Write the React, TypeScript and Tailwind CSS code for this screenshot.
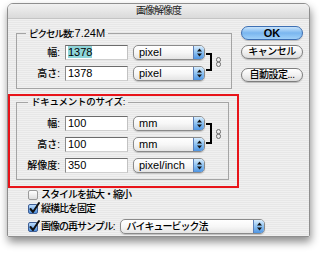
import React from 'react';

const Arrows = () => (
  <svg width="5" height="9" viewBox="0 0 5 9">
    <polygon points="0,3.6 2.5,0.6 5,3.6" fill="#111" />
    <polygon points="0,5.4 2.5,8.4 5,5.4" fill="#111" />
  </svg>
);

const Select = ({ label, className = '', jp }: { label: string; className?: string; jp?: boolean }) => (
  <div
    className={`flex h-[15px] items-stretch rounded-[5px] border border-[#8a8a8a] bg-gradient-to-b from-white via-[#f7f7f7] to-[#e4e4e4] shadow-[0_1px_1px_rgba(0,0,0,0.18)] ${className}`}
  >
    <span
      className={`flex-1 truncate pl-[5px] leading-[13px] text-black ${jp ? 'text-[10px] font-medium tracking-[-1px]' : 'text-[11px]'}`}
    >
      {label}
    </span>
    <span className="flex w-[11px] items-center justify-center rounded-r-[4px] border-l border-[#5b7fb8] bg-gradient-to-b from-[#d8ecfc] via-[#8cc1f1] to-[#4e95e3]">
      <Arrows />
    </span>
  </div>
);

const Field = ({ label, value, unit, selected }: { label: string; value: string; unit: string; selected?: boolean }) => (
  <div className="flex h-[15px] items-center">
    <span className="w-[43px] text-right text-[10px] font-medium leading-none text-black">{label}</span>
    <div className="ml-[5px] h-[15px] w-[63px] border border-t-[#6b6b6b] border-l-[#8a8a8a] border-r-[#c2c2c2] border-b-[#cfcfcf] bg-white pl-[2px] text-[11px] leading-[13px] text-black">
      {selected ? <span className="bg-[#8ed5d9]">{value}</span> : value}
    </div>
    <Select label={unit} className="ml-[5px] w-[72px]" />
  </div>
);

const Link = ({ tall }: { tall?: boolean }) => (
  <div className="flex items-center">
    <div className={`ml-[1px] w-[6px] border-y-2 border-r-2 border-black ${tall ? 'h-[21px]' : 'h-[18px]'}`} />
    <svg className="ml-[4px]" width="5" height="10" viewBox="0 0 5 10">
      <rect x="0.5" y="0.5" width="4" height="4.5" rx="2" fill="none" stroke="#6e6e6e" />
      <rect x="0.5" y="5" width="4" height="4.5" rx="2" fill="none" stroke="#6e6e6e" />
    </svg>
  </div>
);

const Button = ({ children, primary }: { children: React.ReactNode; primary?: boolean }) => (
  <div
    className={`flex h-[14px] w-[62px] items-center justify-center rounded-full border leading-none text-black shadow-[0_1px_1px_rgba(0,0,0,0.2)] ${
      primary
        ? 'border-[#3d6fb3] bg-gradient-to-b from-[#c9e4fb] via-[#7ab6ef] to-[#9fd0f8] text-[11px] font-bold'
        : 'border-[#7e7e7e] bg-gradient-to-b from-white via-[#f1f1f1] to-[#dcdcdc] text-[10px] font-medium tracking-[-0.5px]'
    }`}
  >
    {children}
  </div>
);

const Check = ({ checked }: { checked?: boolean }) =>
  checked ? (
    <div className="relative h-[10px] w-[10px] rounded-[2px] border border-[#3f5f96] bg-gradient-to-b from-[#bcdcfb] to-[#4d8fdc]">
      <svg className="absolute left-[0px] top-[-3px] overflow-visible" width="11" height="12" viewBox="0 0 11 12">
        <path d="M1.5 7 L4 10 L10 1" fill="none" stroke="#111" strokeWidth="2" strokeLinecap="round" strokeLinejoin="round" />
      </svg>
    </div>
  ) : (
    <div className="h-[10px] w-[10px] rounded-[2px] border border-[#9a9a9a] bg-gradient-to-b from-white to-[#dedede]" />
  );

export default function App() {
  return (
    <div className="h-[253px] w-[320px] overflow-hidden bg-white pt-[3px] font-['Liberation_Sans','Noto_Sans_CJK_JP',sans-serif]">
      <div className="ml-[7px] flex h-[234px] w-[303px] flex-col overflow-hidden rounded-t-[6px] rounded-b-[2px] border border-[#8e8e8e] shadow-[1px_5px_8px_rgba(0,0,0,0.45)]">
        <div className="flex h-[15px] items-center justify-center border-b border-[#c4c4c4] bg-gradient-to-b from-[#f1f1f1] to-[#dadada] text-[10px] leading-none tracking-[-1px] text-[#222]">
          画像解像度
        </div>
        <div className="flex-1 bg-[repeating-linear-gradient(180deg,#f0f0f0_0px,#f0f0f0_1px,#e7e7e7_1px,#e7e7e7_2px)]">
          <div className="flex">
            <div className="w-[233px]">
              <fieldset className="ml-[8px] mt-[7px] w-[216px] border border-[#a4a4a4] pb-[7px] pt-[5px]">
                <legend className="ml-[9px] px-[3px] leading-[12px] text-black">
                  <span className="text-[9.5px] font-medium tracking-[-1px]">ピクセル数</span>
                  <span className="text-[11px]">:7.24M</span>
                </legend>
                <div className="flex">
                  <div className="flex flex-col gap-[6px]">
                    <Field label="幅:" value="1378" unit="pixel" selected />
                    <Field label="高さ:" value="1378" unit="pixel" />
                  </div>
                  <div className="mt-[8px] self-start">
                    <Link />
                  </div>
                </div>
              </fieldset>
              <div className="mt-[5px] w-[231px] border-2 border-[#e8141a] pb-[6px]">
                <fieldset className="ml-[6px] w-[213px] border border-[#a4a4a4] pb-[6px] pt-[8px]">
                  <legend className="ml-[11px] px-[3px] text-[9.5px] font-medium leading-[12px] tracking-[-0.3px] text-black">
                    ドキュメントのサイズ:
                  </legend>
                  <div className="flex">
                    <div className="flex flex-col gap-[6px]">
                      <Field label="幅:" value="100" unit="mm" />
                      <Field label="高さ:" value="100" unit="mm" />
                      <Field label="解像度:" value="350" unit="pixel/inch" />
                    </div>
                    <div className="mt-[7px] self-start">
                      <Link tall />
                    </div>
                  </div>
                </fieldset>
              </div>
            </div>
            <div className="flex w-[62px] flex-col">
              <div className="mt-[7px]">
                <Button primary>OK</Button>
              </div>
              <div className="mt-[5px]">
                <Button>キャンセル</Button>
              </div>
              <div className="mt-[9px]">
                <Button>自動設定...</Button>
              </div>
            </div>
          </div>
          <div className="ml-[20px] mt-[1px] flex h-[12px] items-center">
            <Check />
            <span className="ml-[3px] text-[10px] font-medium leading-none tracking-[-1px] text-black">スタイルを拡大・縮小</span>
          </div>
          <div className="ml-[20px] mt-[2px] flex h-[12px] items-center">
            <Check checked />
            <span className="ml-[3px] text-[10px] font-medium leading-none tracking-[-1px] text-black">縦横比を固定</span>
          </div>
          <div className="ml-[20px] mt-[4px] flex h-[15px] items-center">
            <Check checked />
            <span className="ml-[3px] text-[10px] font-medium leading-none tracking-[-1px] text-black">画像の再サンプル:</span>
            <Select jp label="バイキュービック法" className="ml-[6px] w-[145px]" />
          </div>
        </div>
      </div>
    </div>
  );
}
